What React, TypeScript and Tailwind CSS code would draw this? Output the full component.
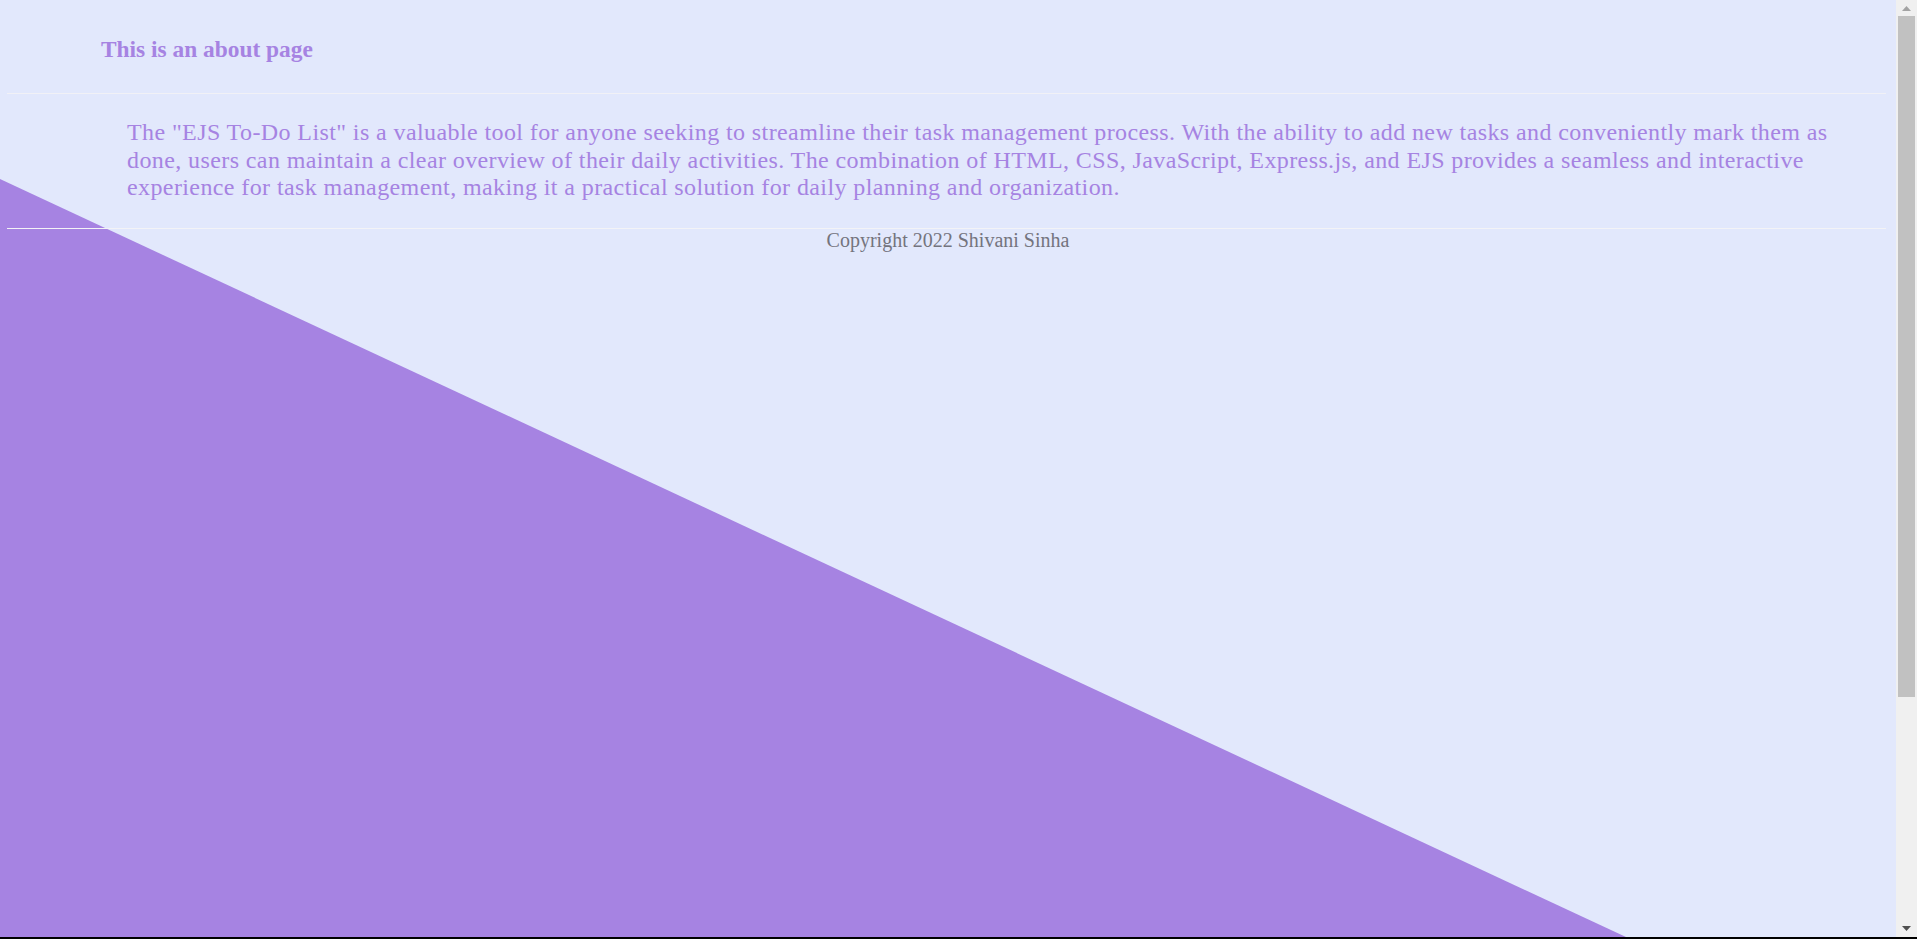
import React from "react";

export default function App() {
  return (
    <div className="flex h-[939px] w-full flex-col overflow-hidden bg-black">
      <div className="flex h-[937px] w-full">
        <div
          className="relative h-full w-[1896px] shrink-0 bg-[#e2e8fc]"
          style={{ fontFamily: '"Liberation Serif", "Times New Roman", serif' }}
        >
          <svg
            className="absolute inset-0 h-full w-full"
            viewBox="0 0 1896 937"
            preserveAspectRatio="none"
          >
            <polygon points="0,179 1626,937 0,937" fill="#a683e2" />
          </svg>
          <div className="relative flex flex-col">
            <div className="pl-[101px] pt-[36px]">
              <h3 className="text-[23.4px] font-bold leading-[27px] text-[#a683e2]">
                This is an about page
              </h3>
            </div>
            <div className="ml-[7px] mt-[30px] h-px w-[1879px] bg-[#f1f1f6]" />
            <p className="ml-[127px] mt-[25px] w-[1730px] text-[24px] leading-[27.6px] tracking-[0.4px] text-[#a683e2]">
              The "EJS To-Do List" is a valuable tool for anyone seeking to streamline their task
              management process. With the ability to add new tasks and conveniently mark them as
              done, users can maintain a clear overview of their daily activities. The combination
              of HTML, CSS, JavaScript, Express.js, and EJS provides a seamless and interactive
              experience for task management, making it a practical solution for daily planning and
              organization.
            </p>
            <div className="ml-[7px] mt-[26px] h-px w-[1879px] bg-[#f3f3f6]" />
            <div className="text-center text-[20px] leading-[23px] text-[#74747e]">
              Copyright 2022 Shivani Sinha
            </div>
          </div>
        </div>
        <div className="flex h-full flex-1 flex-col bg-[#f0f0f0]">
          <div className="flex h-[16px] items-center justify-center">
            <svg width="9" height="5" viewBox="0 0 9 5">
              <polygon points="4.5,0 9,5 0,5" fill="#a3a3a3" />
            </svg>
          </div>
          <div className="mx-[2px] h-[681px] bg-[#c1c1c1]" />
          <div className="flex-1" />
          <div className="flex h-[17px] items-center justify-center">
            <svg width="9" height="5" viewBox="0 0 9 5">
              <polygon points="0,0 9,0 4.5,5" fill="#505050" />
            </svg>
          </div>
        </div>
      </div>
    </div>
  );
}
